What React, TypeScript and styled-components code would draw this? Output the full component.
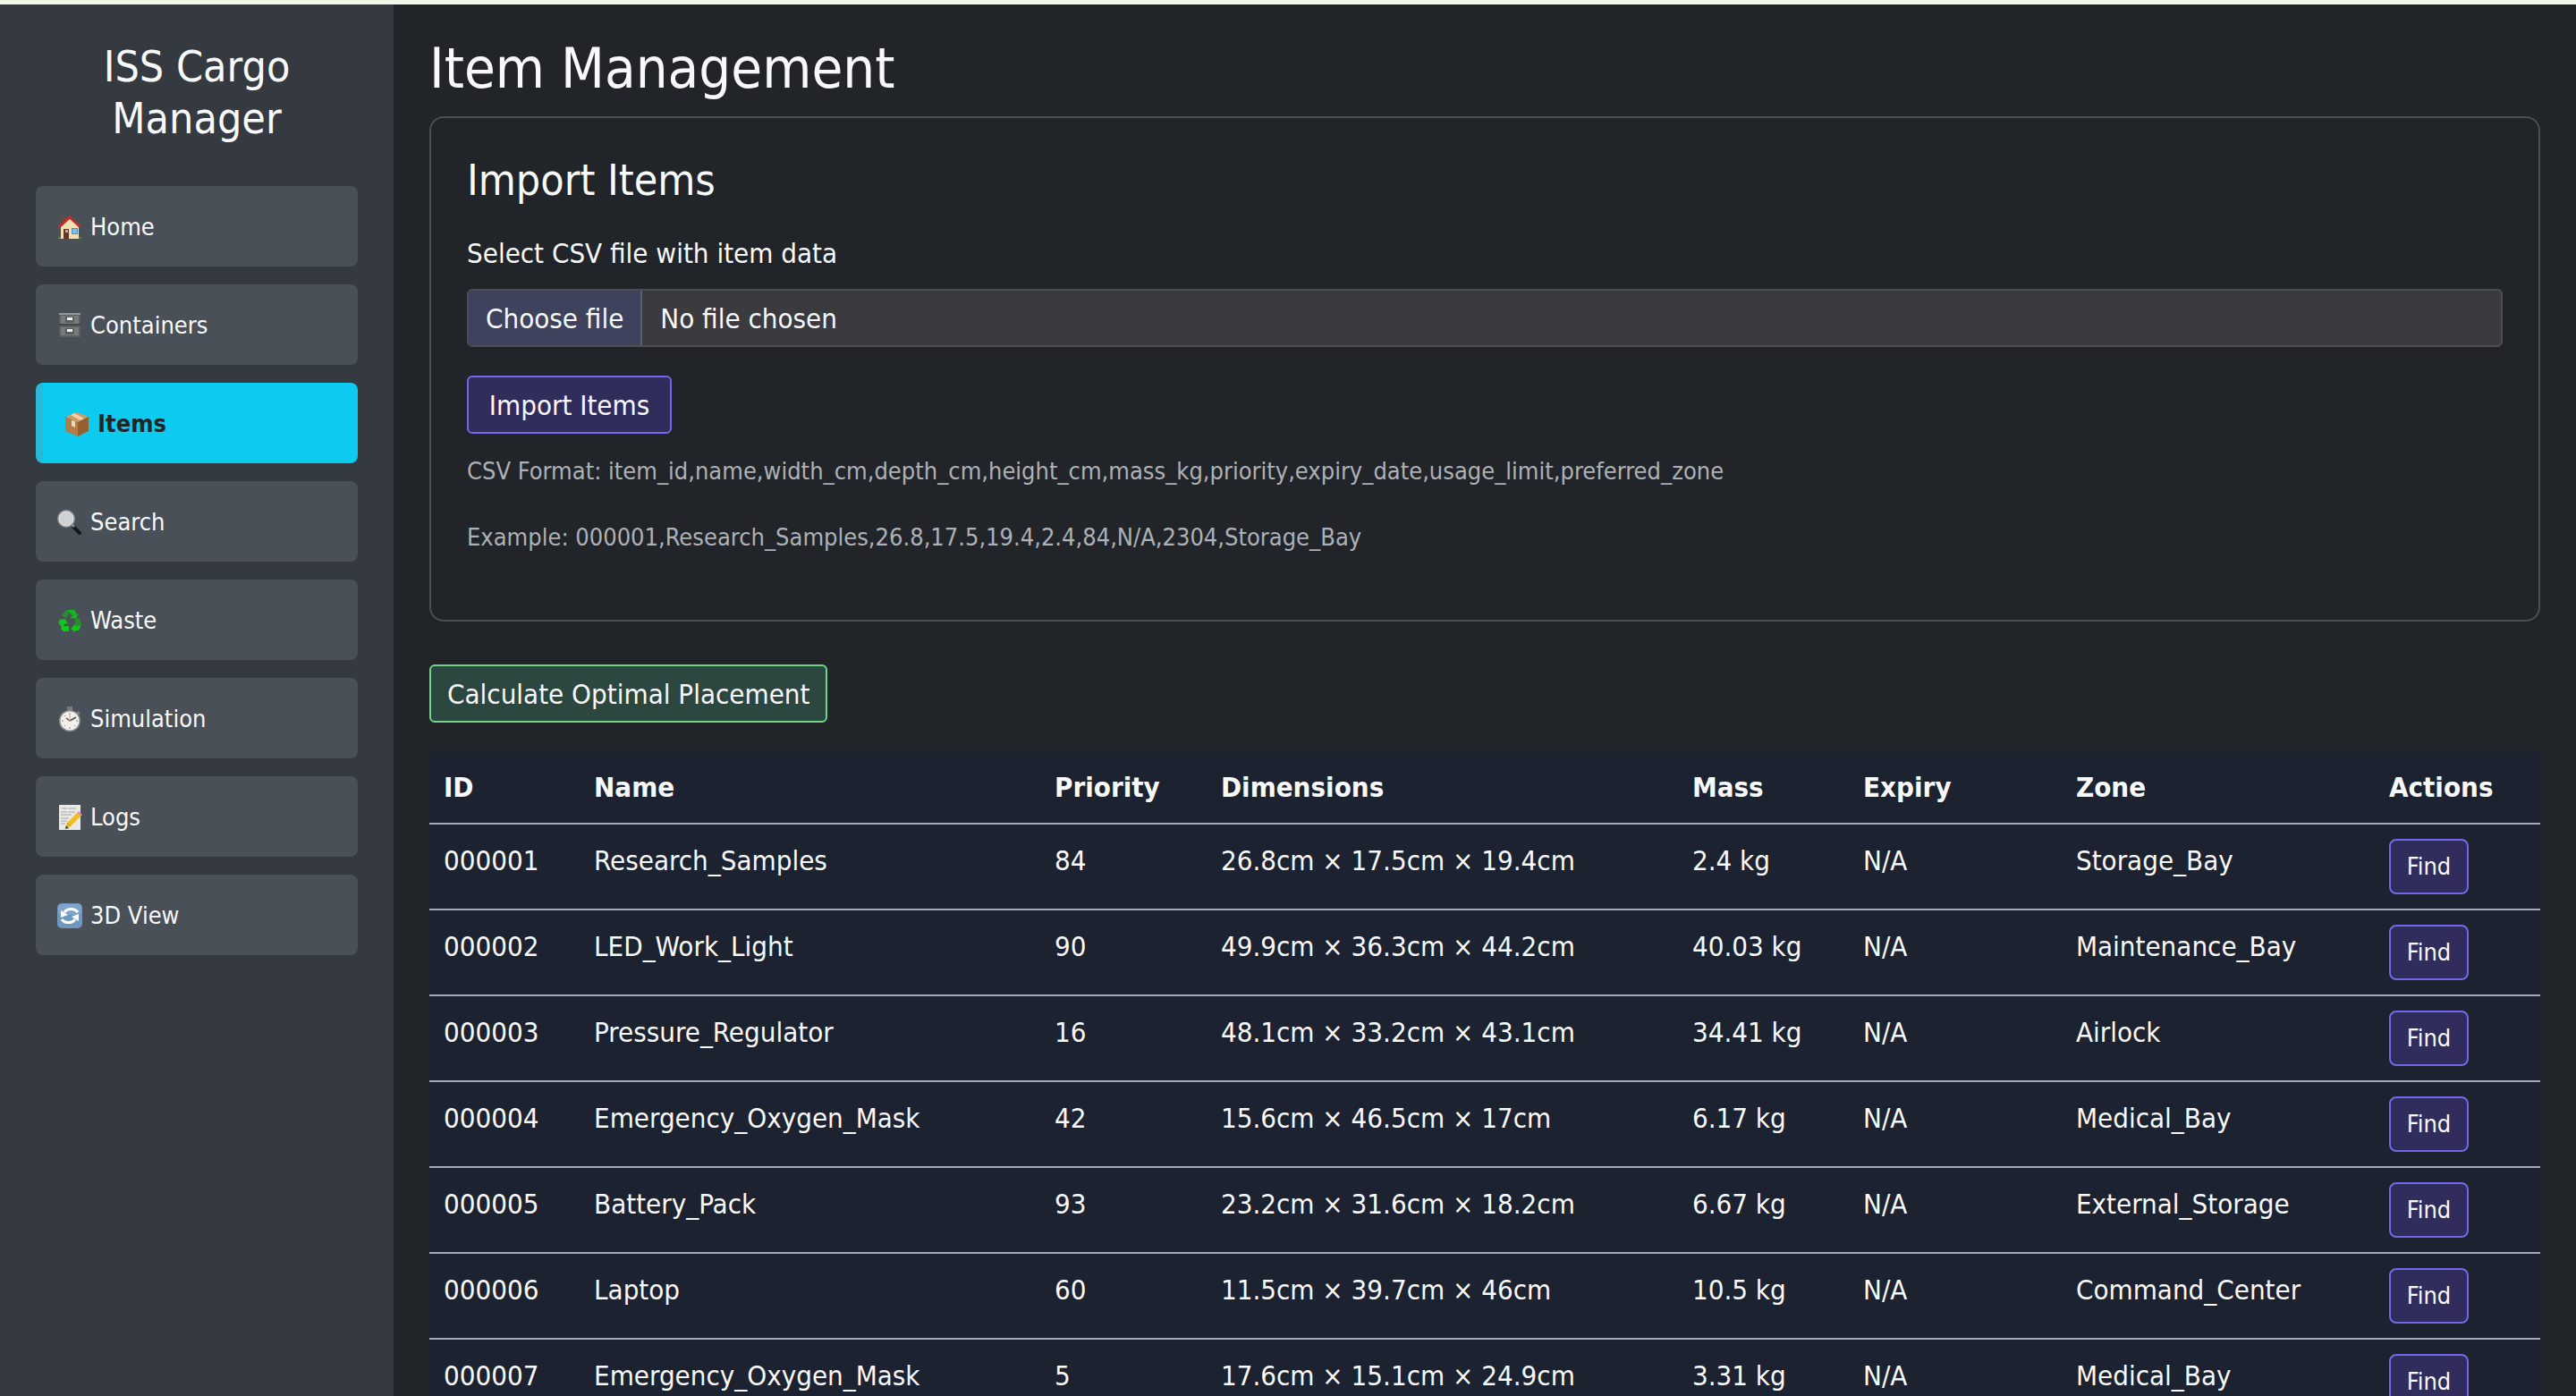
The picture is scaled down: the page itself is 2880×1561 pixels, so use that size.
import React from "react";
import styled, { createGlobalStyle } from "styled-components";

const GlobalStyle = createGlobalStyle`
  *, *::before, *::after { box-sizing: border-box; }
  html, body { margin: 0; padding: 0; }
  body {
    background: #212529;
    color: #f8f9fa;
    font-family: "DejaVu Sans Condensed", "DejaVu Sans", sans-serif;
    font-size: 31px;
    line-height: 48px;
  }
  h1, h2, h3, p { margin: 0; font-weight: 400; }
`;

const Shell = styled.div`
  display: flex;
  height: 100vh;
  border-top: 5px solid #f1f9eb;
`;

const Sidebar = styled.aside`
  flex: 0 0 440px;
  padding: 40px;
  background: #343a40;
`;

const Brand = styled.h2`
  margin-bottom: 47px;
  font-size: 48px;
  line-height: 58px;
  text-align: center;
`;

const NavList = styled.nav`
  display: flex;
  flex-direction: column;
  gap: 20px;
`;

const NavLink = styled.a<{ $active?: boolean }>`
  display: flex;
  align-items: center;
  gap: 9px;
  height: 90px;
  padding: 2px 24px 0;
  border-radius: 8px;
  border-left: ${(p) => (p.$active ? "8px solid #2bb8d8" : "0")};
  background: ${(p) => (p.$active ? "#0dcaf0" : "#495057")};
  color: ${(p) => (p.$active ? "#212529" : "#f8f9fa")};
  font-size: 27px;
  font-weight: ${(p) => (p.$active ? 700 : 400)};
  text-decoration: none;
`;

const NavIcon = styled.svg`
  flex: none;
  width: 28px;
  height: 28px;
`;

const Main = styled.main`
  flex: 1;
  min-width: 0;
  padding: 32px 40px;
  overflow-y: auto;
  scrollbar-width: none;
`;

const PageTitle = styled.h1`
  margin-bottom: 13px;
  font-size: 63px;
  line-height: 80px;
`;

const Card = styled.section`
  padding: 40px 40px 71px;
  margin-bottom: 48px;
  border: 2px solid #4b4e52;
  border-radius: 16px;
`;

const CardTitle = styled.h2`
  margin-bottom: 29px;
  font-size: 48px;
  line-height: 58px;
`;

const FieldLabel = styled.label`
  display: block;
  margin-bottom: 16px;
`;

const FileField = styled.div`
  position: relative;
  display: flex;
  height: 65px;
  margin-bottom: 32px;
  border: 2px solid #4b4e53;
  border-radius: 6px;
  background: #3a3a3f;
  line-height: 62px;
  overflow: hidden;
`;

const FileInput = styled.input`
  position: absolute;
  inset: 0;
  width: 100%;
  opacity: 0;
  cursor: pointer;
`;

const FileButton = styled.span`
  padding: 0 19px;
  border-right: 2px solid #5c6070;
  background: #3e425c;
`;

const FileName = styled.span`
  padding: 0 20px;
`;

const Button = styled.button<{ $tone: "violet" | "green"; $small?: boolean }>`
  display: block;
  min-width: ${(p) => (p.$small ? 89 : 229)}px;
  height: ${(p) => (p.$small ? 62 : 65)}px;
  padding: 0 ${(p) => (p.$small ? 16 : 18)}px;
  border: 2px solid ${(p) => (p.$tone === "violet" ? "#7467ea" : "#73d487")};
  border-radius: ${(p) => (p.$small ? 8 : 6)}px;
  background: ${(p) => (p.$tone === "violet" ? "#302d5c" : "#2c4640")};
  color: #f8f9fa;
  font-family: inherit;
  font-size: ${(p) => (p.$small ? 27 : 31)}px;
  line-height: 48px;
  cursor: pointer;
`;

const Hint = styled.div`
  display: flex;
  flex-direction: column;
  gap: 32px;
  margin-top: 21px;
  color: #adb1b6;
  font-size: 27px;
  line-height: 42px;
`;

const Table = styled.table`
  width: 100%;
  margin-top: 32px;
  border-collapse: separate;
  border-spacing: 0;
  table-layout: fixed;
  background: #1c2230;
`;

const HeadCell = styled.th<{ $share: number }>`
  width: ${(p) => p.$share}%;
  height: 82px;
  padding: 16px;
  border-bottom: 2px solid #9fa9b8;
  font-weight: 700;
  text-align: left;
  vertical-align: top;
  white-space: nowrap;
`;

const Cell = styled.td`
  height: 96px;
  padding: 16px;
  border-bottom: 2px solid #9fa9b8;
  vertical-align: top;
  white-space: nowrap;
`;

const HomeIcon = () => (
  <NavIcon viewBox="0 0 28 28" aria-hidden="true">
    <path d="M1 25h26v2H1z" fill="#4f8a3a" />
    <path d="M5 3h4v7H5z" fill="#8f3a30" />
    <path d="M4 12 14 4l10 8v15H4z" fill="#f3dfb4" />
    <path d="M14 1 1 13l2 2L14 5l11 10 2-2z" fill="#b8322b" />
    <path d="M7 16h6v11H7z" fill="#6a3428" />
    <path d="M9 17h3v3H9z" fill="#9fb4bf" />
    <path d="M16 15h7v7h-7z" fill="#4d8fb8" />
    <path d="M17 16h5v5h-5z" fill="#7cc0e8" />
  </NavIcon>
);

const CabinetIcon = () => (
  <NavIcon viewBox="0 0 28 28" aria-hidden="true">
    <path d="M2 0h24v27H2z" fill="#5b5f62" />
    <path d="M2 0h24v2H2z" fill="#94989b" />
    <path d="M4 3h20v9H4zM4 16h20v9H4z" fill="#777b7e" />
    <path d="M2 12h24v2H2z" fill="#43474a" />
    <path d="M9 4h10v7H9zM9 17h10v7H9z" fill="#5a5e61" />
    <path d="M11 5h6v3h-6zM11 18h6v3h-6z" fill="#f4f5f5" />
  </NavIcon>
);

const BoxIcon = () => (
  <NavIcon viewBox="0 0 28 28" aria-hidden="true">
    <path d="M1 6 14 1l13 5-12 6z" fill="#cf9c66" />
    <path d="M1 6l14 6v16L1 22z" fill="#b37c46" />
    <path d="M27 6l-12 6v16l12-6z" fill="#94602f" />
    <path d="M7 4l4-2 11 6-4 2z" fill="#ecd3ae" />
    <path d="M8 10l4 1v7l-4-2z" fill="#ecd9bd" />
  </NavIcon>
);

const SearchIcon = () => (
  <NavIcon viewBox="0 0 28 28" aria-hidden="true">
    <path d="M19 20l6 6" stroke="#15181a" strokeWidth="4" strokeLinecap="round" />
    <path d="M16 16l3 3" stroke="#9a9ea1" strokeWidth="2" />
    <circle cx="10" cy="10" r="9" fill="#cfd1d3" stroke="#8d9295" strokeWidth="2" />
    <circle cx="10" cy="10" r="8" fill="none" stroke="#e8eaeb" />
  </NavIcon>
);

const RecycleIcon = () => (
  <NavIcon viewBox="0 0 28 28" aria-hidden="true">
    <path d="M11 2h8l3 5 2-1-3 6-7-1 3-2-3-4z" fill="#17b51f" />
    <path d="M10 2l4 3-4 6-5-3z" fill="#2f8a35" />
    <path d="M1 13l8-1 3 6-3-1-2 3H4l-3-4 2-2z" fill="#12c41b" />
    <path d="M5 20h8v6H7l-3-3z" fill="#10c918" />
    <path d="M20 13l4-2 3 6-3 3h-5z" fill="#2a8c31" />
    <path d="M27 18l-3 7h-4v2l-5-4 5-5v2h4z" fill="#12c41b" />
  </NavIcon>
);

const StopwatchIcon = () => (
  <NavIcon viewBox="0 0 28 28" aria-hidden="true">
    <path d="M11 0h6v5h-6z" fill="#747b80" />
    <path d="M23 5l3 2-2 3-3-3z" fill="#747b80" />
    <circle cx="14" cy="16" r="12" fill="#8c9195" />
    <circle cx="14" cy="16" r="10.500" fill="#f2f0ed" />
    <path d="M14 7v2M14 23v2M5 16h2M21 16h2M8 10l1 1M19 21l1 1M8 22l1-1" stroke="#888" />
    <path d="M14 16l-4-3M14 16l7-4" stroke="#55504c" strokeWidth="1.500" />
    <path d="M14 9v8" stroke="#e2a39a" />
  </NavIcon>
);

const MemoIcon = () => (
  <NavIcon viewBox="0 0 28 28" aria-hidden="true">
    <path d="M2 0h24v28H2z" fill="#e9e9e7" />
    <path d="M5 4h6M12 4h9M4 8h7M12 8h8M4 11h12M4 15h9M4 18h7M4 21h5" stroke="#a3a6a8" />
    <path d="M9 26l2-6L22 9l4 4-11 11z" fill="#f3bd21" />
    <path d="M11 20l4 4" stroke="#c98d13" />
    <path d="M22 9l2-2 4 4-2 2z" fill="#e58d94" />
    <path d="M9 27l1-4 3 3z" fill="#4a4038" />
  </NavIcon>
);

const RefreshIcon = () => (
  <NavIcon viewBox="0 0 28 28" aria-hidden="true">
    <rect width="28" height="28" rx="5" fill="#6d97bf" />
    <rect x="1" y="1" width="26" height="12" rx="4" fill="#7ea5c9" />
    <path d="M8 10a9 8 0 0 1 15 0M20 18a9 8 0 0 1-15 0" fill="none" stroke="#fff" strokeWidth="3" />
    <path d="M4 8v8l8-3zM24 20v-8l-8 3z" fill="#fff" />
  </NavIcon>
);

const navItems = [
  { label: "Home", Icon: HomeIcon },
  { label: "Containers", Icon: CabinetIcon },
  { label: "Items", Icon: BoxIcon, active: true },
  { label: "Search", Icon: SearchIcon },
  { label: "Waste", Icon: RecycleIcon },
  { label: "Simulation", Icon: StopwatchIcon },
  { label: "Logs", Icon: MemoIcon },
  { label: "3D View", Icon: RefreshIcon },
];

const columns = [
  { title: "ID", share: 7.12 },
  { title: "Name", share: 21.82 },
  { title: "Priority", share: 7.88 },
  { title: "Dimensions", share: 22.33 },
  { title: "Mass", share: 8.1 },
  { title: "Expiry", share: 10.08 },
  { title: "Zone", share: 14.83 },
  { title: "Actions", share: 7.84 },
];

const items = [
  ["000001", "Research_Samples", "84", "26.8cm × 17.5cm × 19.4cm", "2.4 kg", "N/A", "Storage_Bay"],
  ["000002", "LED_Work_Light", "90", "49.9cm × 36.3cm × 44.2cm", "40.03 kg", "N/A", "Maintenance_Bay"],
  ["000003", "Pressure_Regulator", "16", "48.1cm × 33.2cm × 43.1cm", "34.41 kg", "N/A", "Airlock"],
  ["000004", "Emergency_Oxygen_Mask", "42", "15.6cm × 46.5cm × 17cm", "6.17 kg", "N/A", "Medical_Bay"],
  ["000005", "Battery_Pack", "93", "23.2cm × 31.6cm × 18.2cm", "6.67 kg", "N/A", "External_Storage"],
  ["000006", "Laptop", "60", "11.5cm × 39.7cm × 46cm", "10.5 kg", "N/A", "Command_Center"],
  ["000007", "Emergency_Oxygen_Mask", "5", "17.6cm × 15.1cm × 24.9cm", "3.31 kg", "N/A", "Medical_Bay"],
];

export default function App() {
  return (
    <>
      <GlobalStyle />
      <Shell>
        <Sidebar>
          <Brand>ISS Cargo Manager</Brand>
          <NavList aria-label="Main">
            {navItems.map(({ label, Icon, active }) => (
              <NavLink key={label} href="#" $active={active} aria-current={active ? "page" : undefined}>
                <Icon />
                {label}
              </NavLink>
            ))}
          </NavList>
        </Sidebar>
        <Main>
          <PageTitle>Item Management</PageTitle>
          <Card>
            <CardTitle>Import Items</CardTitle>
            <FieldLabel htmlFor="csv-file">Select CSV file with item data</FieldLabel>
            <FileField>
              <FileButton>Choose file</FileButton>
              <FileName>No file chosen</FileName>
              <FileInput id="csv-file" type="file" accept=".csv" />
            </FileField>
            <Button type="button" $tone="violet">Import Items</Button>
            <Hint>
              <p>CSV Format: item_id,name,width_cm,depth_cm,height_cm,mass_kg,priority,expiry_date,usage_limit,preferred_zone</p>
              <p>Example: 000001,Research_Samples,26.8,17.5,19.4,2.4,84,N/A,2304,Storage_Bay</p>
            </Hint>
          </Card>
          <Button type="button" $tone="green">Calculate Optimal Placement</Button>
          <Table>
            <thead>
              <tr>
                {columns.map((c) => (
                  <HeadCell key={c.title} scope="col" $share={c.share}>{c.title}</HeadCell>
                ))}
              </tr>
            </thead>
            <tbody>
              {items.map((row) => (
                <tr key={row[0]}>
                  {row.map((value, i) => (
                    <Cell key={i}>{value}</Cell>
                  ))}
                  <Cell>
                    <Button type="button" $tone="violet" $small>Find</Button>
                  </Cell>
                </tr>
              ))}
            </tbody>
          </Table>
        </Main>
      </Shell>
    </>
  );
}
